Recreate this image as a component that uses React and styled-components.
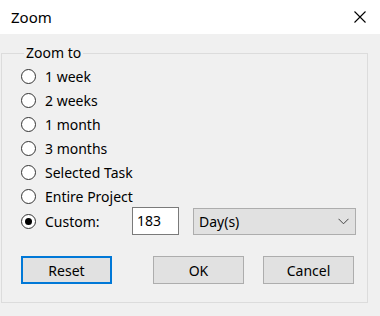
import React from "react";
import styled, { createGlobalStyle } from "styled-components";

const Global = createGlobalStyle`
  html, body { margin: 0; padding: 0; background: #f0f0f0; }
  body { width: 380px; height: 316px; overflow: hidden; font-family: "Noto Sans", "Open Sans", sans-serif; color: #000; }
  * { box-sizing: border-box; }
`;

const Window = styled.div`
  width: 380px;
  height: 316px;
  display: flex;
  flex-direction: column;
  background: #f0f0f0;
`;

const TitleBar = styled.div`
  height: 34px;
  background: #fff;
  display: flex;
  align-items: center;
  justify-content: space-between;
  padding: 0 14px 0 11px;
`;

const Title = styled.span`
  font-size: 15px;
  line-height: 20px;
`;

const Close = styled.svg`
  width: 12px;
  height: 12px;
  margin-top: -1px;
`;

const Group = styled.fieldset`
  margin: 11px 13px 0 1px;
  padding: 3px 11px 17px 19px;
  border: 1px solid #dcdcdc;
  height: 258px;
  display: flex;
  flex-direction: column;
`;

const Legend = styled.legend`
  font-size: 14px;
  line-height: 16px;
  padding: 0 2px;
  margin-left: 3px;
`;

const RadioRow = styled.label`
  display: flex;
  align-items: center;
  height: 24px;
  font-size: 14px;
  gap: 9px;
`;

const Circle = styled.span`
  width: 15px;
  height: 15px;
  border-radius: 50%;
  border: 1px solid #333;
  background: #fff;
  display: flex;
  align-items: center;
  justify-content: center;
  flex: none;
  &::after {
    content: "";
    width: 7px;
    height: 7px;
    border-radius: 50%;
    background: ${(p) => (p.$checked ? "#000" : "transparent")};
  }
`;

const CustomRow = styled.div`
  display: flex;
  align-items: center;
  height: 28px;
  margin-top: -1px;
`;

const CustomLabel = styled(RadioRow)`
  width: 111px;
`;

const NumberBox = styled.div`
  width: 47px;
  height: 28px;
  border: 1px solid #7a7a7a;
  background: #fff;
  font-size: 14px;
  line-height: 26px;
  padding-left: 4px;
  margin-right: 14px;
`;

const Select = styled.div`
  width: 163px;
  height: 27px;
  border: 1px solid #adadad;
  background: #e1e1e1;
  font-size: 14px;
  display: flex;
  align-items: center;
  justify-content: space-between;
  padding: 0 6px 0 5px;
`;

const Buttons = styled.div`
  display: flex;
  margin-top: 21px;
`;

const Button = styled.button`
  width: 91px;
  height: 28px;
  font-family: inherit;
  font-size: 14px;
  color: #000;
  background: #e1e1e1;
  border: ${(p) => (p.$focus ? "2px solid #0078d7" : "1px solid #adadad")};
  margin-left: ${(p) => p.$gap || 0}px;
  padding: 0;
`;

const options = ["1 week", "2 weeks", "1 month", "3 months", "Selected Task", "Entire Project"];

export default function App() {
  return (
    <Window>
      <Global />
      <TitleBar>
        <Title>Zoom</Title>
        <Close viewBox="0 0 12 12">
          <path d="M0.5 0.5 L11.5 11.5 M11.5 0.5 L0.5 11.5" stroke="#000" strokeWidth="1.1" fill="none" />
        </Close>
      </TitleBar>
      <Group>
        <Legend>Zoom to</Legend>
        {options.map((o) => (
          <RadioRow key={o}>
            <Circle />
            {o}
          </RadioRow>
        ))}
        <CustomRow>
          <CustomLabel>
            <Circle $checked />
            Custom:
          </CustomLabel>
          <NumberBox>183</NumberBox>
          <Select>
            <span>Day(s)</span>
            <svg width="11" height="7" viewBox="0 0 11 7">
              <path d="M0.5 0.8 L5.5 5.8 L10.5 0.8" stroke="#444" strokeWidth="1" fill="none" />
            </svg>
          </Select>
        </CustomRow>
        <Buttons>
          <Button $focus>Reset</Button>
          <Button $gap={41}>OK</Button>
          <Button $gap={19}>Cancel</Button>
        </Buttons>
      </Group>
    </Window>
  );
}
